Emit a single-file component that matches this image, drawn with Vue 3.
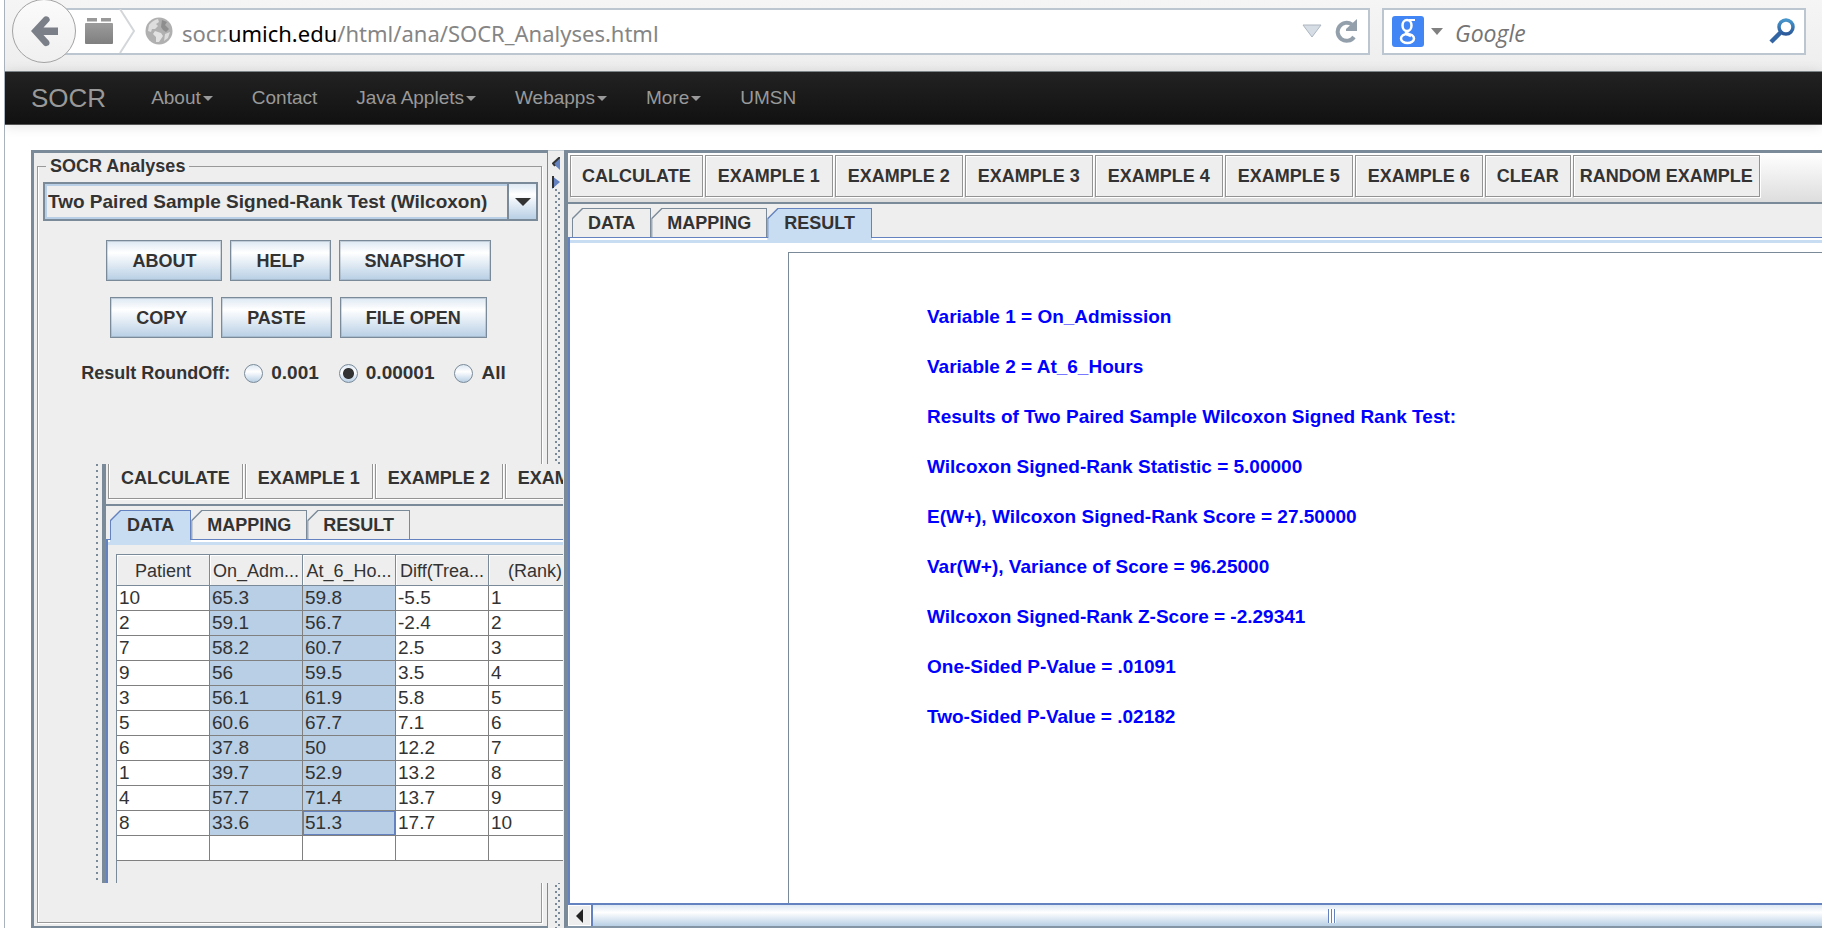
<script setup>
import { ref } from 'vue'

const menu = [
  { label: 'About', caret: true },
  { label: 'Contact', caret: false },
  { label: 'Java Applets', caret: true },
  { label: 'Webapps', caret: true },
  { label: 'More', caret: true },
  { label: 'UMSN', caret: false }
]
const analysis = ref('Two Paired Sample Signed-Rank Test (Wilcoxon)')
const roundOff = ref('0.00001')
const roundOptions = ['0.001', '0.00001', 'All']
const actionRows = [
  ['ABOUT', 'HELP', 'SNAPSHOT'],
  ['COPY', 'PASTE', 'FILE OPEN']
]
const tools = [
  'CALCULATE', 'EXAMPLE 1', 'EXAMPLE 2', 'EXAMPLE 3', 'EXAMPLE 4',
  'EXAMPLE 5', 'EXAMPLE 6', 'CLEAR', 'RANDOM EXAMPLE'
]
const tabs = ['DATA', 'MAPPING', 'RESULT']
const results = [
  'Variable 1 = On_Admission',
  'Variable 2 = At_6_Hours',
  'Results of Two Paired Sample Wilcoxon Signed Rank Test:',
  'Wilcoxon Signed-Rank Statistic = 5.00000',
  'E(W+), Wilcoxon Signed-Rank Score = 27.50000',
  'Var(W+), Variance of Score = 96.25000',
  'Wilcoxon Signed-Rank Z-Score = -2.29341',
  'One-Sided P-Value = .01091',
  'Two-Sided P-Value = .02182'
]
const columns = ['Patient', 'On_Adm...', 'At_6_Ho...', 'Diff(Trea...', '(Rank)']
const rows = [
  ['10', '65.3', '59.8', '-5.5', '1'],
  ['2', '59.1', '56.7', '-2.4', '2'],
  ['7', '58.2', '60.7', '2.5', '3'],
  ['9', '56', '59.5', '3.5', '4'],
  ['3', '56.1', '61.9', '5.8', '5'],
  ['5', '60.6', '67.7', '7.1', '6'],
  ['6', '37.8', '50', '12.2', '7'],
  ['1', '39.7', '52.9', '13.2', '8'],
  ['4', '57.7', '71.4', '13.7', '9'],
  ['8', '33.6', '51.3', '17.7', '10'],
  ['', '', '', '', '']
]
const isSelected = (r, c) => r < 10 && (c === 1 || c === 2)
const isFocused = (r, c) => r === 9 && c === 2
</script>

<template>
  <div class="window">
    <header class="chrome">
      <button class="back" aria-label="Back">
        <svg viewBox="0 0 62 62" width="62" height="62">
          <path d="M18 31 L31 17 Q33 15.500 36 17.500 Q37.500 19.500 36 21.500 L30.500 27.500 H45 V35 H30.500 L36 41 Q37.500 43.500 36 45 Q33 47 31 45.500 Z" fill="#7b7f88" />
        </svg>
      </button>
      <div class="address">
        <svg class="brick" viewBox="0 0 30 28" width="30" height="28" aria-hidden="true">
          <defs><linearGradient id="brickFill" x1="0" y1="0" x2="0" y2="1"><stop offset="0" stop-color="#9c9c9c" /><stop offset="1" stop-color="#7f7f7f" /></linearGradient></defs>
          <path d="M3 1h10v3.500H3zM17 1h10v3.500H17z" fill="#999" />
          <rect x="1" y="6" width="28" height="21" rx="1" fill="url(#brickFill)" />
        </svg>
        <svg class="chevron" viewBox="0 0 18 44" width="18" height="44" aria-hidden="true">
          <path d="M2 0 L16 22 L2 44" fill="none" stroke="#d4d7da" stroke-width="2" />
        </svg>
        <svg class="globe" viewBox="0 0 28 28" width="28" height="28" aria-hidden="true">
          <circle cx="14" cy="14" r="13.500" fill="#b0b0b0" />
          <path d="M4 8 Q8 3 13 2 L14 5 L11 7 L13 9 L10 12 L7 12 L6 15 L3 14 Z" fill="#dedede" />
          <path d="M17 3 L22 5 L20 8 L24 12 L21 15 L18 13 L16 10 Z" fill="#8e8e8e" />
          <path d="M10 14 L16 16 L18 19 L14 25 L11 25 L11 20 L8 17 Z" fill="#e2e2e2" />
          <path d="M20 17 L25 15 L23 21 L19 24 Z" fill="#dcdcdc" />
        </svg>
        <div class="url" role="textbox" aria-label="Address">socr.<b>umich.edu</b>/html/ana/SOCR_Analyses.html</div>
        <svg viewBox="0 0 20 14" width="20" height="14" aria-hidden="true">
          <path d="M1 1 H19 L10 13 Z" fill="#d6dde5" stroke="#adb6c0" stroke-width="1" />
        </svg>
        <button class="plain reload" aria-label="Reload">
          <svg viewBox="0 0 24 24" width="24" height="24">
            <path d="M20 18 A9 9 0 1 1 18 5.500" fill="none" stroke="#93a0ac" stroke-width="4" />
            <path d="M23 0 V12 H12 V10 Z" fill="#93a0ac" />
          </svg>
        </button>
      </div>
      <div class="search">
        <button class="plain engine" aria-label="Choose search engine">
          <svg viewBox="0 0 32 31" width="32" height="31">
            <rect width="32" height="31" rx="3" fill="#4285f4" />
            <g fill="none" stroke="#fff">
              <ellipse cx="15" cy="9.500" rx="4.500" ry="5.500" stroke-width="2.500" />
              <path d="M17 4 H23" stroke-width="2" />
              <path d="M17 15 Q12 16.500 15 18.500 L19 20" stroke-width="2.500" />
              <ellipse cx="15.500" cy="22.500" rx="6.500" ry="4.500" stroke-width="2.500" />
            </g>
          </svg>
          <svg viewBox="0 0 12 7" width="12" height="7"><path d="M0 0 H12 L6 7 Z" fill="#808080" /></svg>
        </button>
        <input class="query" type="text" placeholder="Google" aria-label="Search Google">
        <button class="plain" aria-label="Search">
          <svg viewBox="0 0 28 28" width="28" height="28">
            <defs><linearGradient id="lens" x1="0" y1="0" x2="0" y2="1"><stop offset="0" stop-color="#4796cb" /><stop offset="1" stop-color="#2c5a9b" /></linearGradient></defs>
            <path d="M12.500 15.500 L3 25" stroke="#3365a5" stroke-width="4.500" fill="none" />
            <circle cx="18" cy="10" r="7" fill="none" stroke="url(#lens)" stroke-width="3.500" />
          </svg>
        </button>
      </div>
    </header>

    <nav class="navbar">
      <a href="#" class="brand">SOCR</a>
      <a v-for="item in menu" :key="item.label" href="#" class="nav-item">{{ item.label }}<span v-if="item.caret" class="caret"></span></a>
    </nav>

    <main class="workspace">
      <section class="controls">
        <fieldset class="group">
          <legend>SOCR Analyses</legend>
          <div class="combo">
            <select v-model="analysis" aria-label="Analysis">
              <option>Two Paired Sample Signed-Rank Test (Wilcoxon)</option>
            </select>
            <span class="combo-arrow" aria-hidden="true"><svg viewBox="0 0 16 8" width="16" height="8"><path d="M0 0H16L8 8Z" fill="#333" /></svg></span>
          </div>
          <div v-for="(row, i) in actionRows" :key="i" class="actions">
            <button v-for="name in row" :key="name" class="metal">{{ name }}</button>
          </div>
          <div class="rounding" role="radiogroup" aria-label="Result RoundOff">
            <span>Result RoundOff:</span>
            <label v-for="o in roundOptions" :key="o"><input v-model="roundOff" type="radio" name="roundoff" :value="o">{{ o }}</label>
          </div>
        </fieldset>
      </section>

      <div class="divider" aria-hidden="true">
        <svg viewBox="0 0 8 32" width="8" height="32">
          <path d="M8 0 V13 L1 6.500 Z" fill="#6382bf" /><path d="M8 0 L1 6.500 L3 9" fill="none" stroke="#333" stroke-width="2" />
          <path d="M0 19 V32 L8 25 Z" fill="#6382bf" /><path d="M1 19 V31" stroke="#333" stroke-width="2" />
        </svg>
        <div class="bumps"></div>
      </div>

      <section class="output">
        <div class="toolbar">
          <button v-for="name in tools" :key="name" class="tool" :class="{ snug: !name.startsWith('EX'), tight: name === 'RANDOM EXAMPLE' }">{{ name }}</button>
        </div>
        <div class="tabbar" role="tablist">
          <button v-for="name in tabs" :key="name" class="tab" role="tab" :class="{ active: name === 'RESULT' }" :aria-selected="name === 'RESULT'"><span>{{ name }}</span></button>
        </div>
        <div class="edge"></div>
        <div class="result-pane">
          <div class="result-box">
            <p v-for="line in results" :key="line">{{ line }}</p>
          </div>
        </div>
        <div class="scrollbar">
          <button class="plain scroll-left" aria-label="Scroll left"><svg viewBox="0 0 7 14" width="7" height="14"><path d="M7 0V14L0 7Z" fill="#222" /></svg></button>
          <div class="thumb"><span class="grip"></span></div>
        </div>
      </section>

      <section class="overlay">
        <div class="bumps narrow"></div>
        <div class="overlay-body">
          <div class="toolbar">
            <button v-for="name in tools.slice(0, 4)" :key="name" class="tool">{{ name }}</button>
          </div>
          <div class="tabbar" role="tablist">
            <button v-for="name in tabs" :key="name" class="tab" role="tab" :class="{ active: name === 'DATA' }" :aria-selected="name === 'DATA'"><span>{{ name }}</span></button>
          </div>
          <div class="edge"></div>
          <div class="data-pane">
            <div class="table-frame">
              <table>
                <thead><tr><th v-for="c in columns" :key="c" scope="col">{{ c }}</th></tr></thead>
                <tbody>
                  <tr v-for="(row, r) in rows" :key="r">
                    <td v-for="(cell, c) in row" :key="c" :class="{ selected: isSelected(r, c), focused: isFocused(r, c) }">{{ cell }}</td>
                  </tr>
                </tbody>
              </table>
            </div>
          </div>
        </div>
      </section>
    </main>
  </div>
</template>

<style>
body { margin: 0; background: #fff; }
</style>

<style scoped>
* { box-sizing: border-box; }
.window {
  display: flex;
  flex-direction: column;
  height: 100vh;
  min-height: 920px;
  margin-left: 4px;
  border-left: 1px solid #aab3bc;
  overflow: hidden;
  font-family: "Liberation Sans", Arial, sans-serif;
  color: #333;
}
button, input, select { font: inherit; color: inherit; margin: 0; }
.plain { padding: 0; border: 0; background: none; display: flex; align-items: center; }

.chrome {
  display: flex;
  align-items: center;
  height: 71px;
  flex: none;
  padding: 0 16px 9px 7px;
  background: linear-gradient(#f5f5f5, #eee);
}
.back {
  flex: none;
  width: 64px;
  height: 64px;
  padding: 0;
  border: 1px solid #a3a3a3;
  border-radius: 50%;
  background: linear-gradient(#fbfbfb, #f0f0f0);
  position: relative;
  z-index: 1;
}
.address, .search {
  display: flex;
  align-items: center;
  height: 47px;
  border: 2px solid #bcc6d0;
  background: #fff;
}
.address { flex: 1; margin-left: -12px; padding: 0 10px 0 18px; }
.chevron { margin-left: 4px; }
.globe { margin: 0 9px; }
.url { flex: 1; padding-top: 4px; font: 22px/30px "Noto Sans", sans-serif; color: #858585; white-space: nowrap; }
.url b { font-weight: 400; color: #000; }
.reload { margin-left: 12px; }
.search { width: 424px; margin-left: 12px; padding: 0 8px; }
.engine { gap: 7px; }
.query {
  flex: 1;
  min-width: 0;
  margin-left: 12px;
  padding: 4px 0 0;
  border: 0;
  outline: 0;
  background: none;
  font: italic 23px/30px "Open Sans", sans-serif;
}
.query::placeholder { color: #757575; opacity: 1; }

.navbar {
  display: flex;
  align-items: center;
  flex: none;
  height: 54px;
  padding: 0 26px;
  border-top: 1px solid #7d8488;
  border-bottom: 1px solid #555;
  background: linear-gradient(#222, #111);
  box-shadow: 0 1px 12px rgba(0, 0, 0, 0.12);
  gap: 39px;
}
.navbar a { color: #999; text-decoration: none; white-space: nowrap; }
.brand { font-size: 26px; line-height: 30px; margin-right: 6px; }
.nav-item { display: flex; align-items: center; gap: 2px; font-size: 19px; line-height: 24px; }
.caret { border: 5px solid transparent; border-top-color: #999; border-bottom: 0; }

.workspace {
  position: relative;
  display: grid;
  grid-template-columns: 517px 16px minmax(0, 1fr);
  flex: 1;
  min-height: 0;
  margin: 25px 0 0 26px;
  background: #eee;
  font-size: 18px;
  line-height: 22px;
  font-weight: 700;
}
.controls {
  display: flex;
  padding: 2px 5px 3px 3px;
  border: 3px solid #7a8a99;
  border-right-width: 1px;
  border-bottom-width: 2px;
}
.group {
  flex: 1;
  min-width: 0;
  margin: 0;
  padding: 5px 3px 0 5px;
  border: 1px solid #999;
  box-shadow: inset 1px 0 #fff, 1px 1px #fff;
}
.group legend { margin-left: 3px; padding: 0 4px; }
.combo { display: flex; height: 39px; border: 2px solid #7a8a99; box-shadow: inset 0 0 0 2px #b8cfe5; }
.combo select {
  flex: 1;
  min-width: 0;
  appearance: none;
  border: 0;
  padding: 0 2px 0 3px;
  background: transparent;
  font-size: 19px;
  font-weight: 700;
}
.combo-arrow {
  display: flex;
  align-items: center;
  justify-content: center;
  width: 29px;
  border-left: 2px solid #7a8a99;
  background: linear-gradient(#dde8f3, #fff 30%, #b8cfe5);
}
.actions { display: flex; justify-content: center; gap: 8px; margin-top: 16px; padding-left: 16px; }
.combo + .actions { margin-top: 19px; }
.metal {
  height: 41px;
  padding: 0 25px;
  border: 1px solid #7a8a99;
  box-shadow: inset 0 0 0 1px rgba(122, 138, 153, 0.3);
  background: linear-gradient(#dde8f3, #fff 30%, #b8cfe5);
  font-weight: 700;
}
.rounding { display: flex; align-items: center; justify-content: center; margin-top: 24px; padding-left: 6px; white-space: nowrap; }
.rounding span { margin-right: 14px; }
.rounding label { display: flex; align-items: center; gap: 8px; font-size: 19px; }
.rounding label + label { margin-left: 20px; }
.rounding input {
  appearance: none;
  width: 19px;
  height: 19px;
  border: 1px solid #7a8a99;
  border-radius: 50%;
  background: linear-gradient(#dde8f3, #fff 40%, #b8cfe5);
}
.rounding input:checked { background: radial-gradient(circle, #333 5px, transparent 6px), linear-gradient(#dde8f3, #fff 40%, #b8cfe5); }

.divider { display: flex; flex-direction: column; padding: 6px 2px 0 4px; border-top: 1px solid #c4ccd4; }
.bumps {
  flex: 1;
  width: 6px;
  margin-left: 3px;
  background:
    radial-gradient(circle at 1px 1px, #7a8a99 1px, transparent 1px) 0 0 / 6px 6px,
    radial-gradient(circle at 4px 4px, #7a8a99 1px, transparent 1px) 0 0 / 6px 6px;
}
.bumps.narrow { flex: none; width: 3px; margin: 0 3px 0 1px; }

.output {
  display: flex;
  flex-direction: column;
  min-width: 0;
  border-top: 3px solid #7a8a99;
  border-left: 4px solid #7a8a99;
  border-bottom: 2px solid #8495a5;
}
.toolbar {
  display: flex;
  flex: none;
  gap: 2px;
  padding: 2px 2px 5px;
  border-bottom: 2px solid #7a8a99;
  background: linear-gradient(#fff, #ddd);
}
.tool {
  flex: none;
  height: 42px;
  padding: 0 12px;
  border: 1px solid #939393;
  box-shadow: inset 1px 1px #fff, 1px 1px #fff;
  background: #eee;
  font-weight: 700;
  white-space: nowrap;
}
.tool.snug { padding: 0 11px; }
.tool.tight { padding: 0 6px; }
.tabbar { display: flex; flex: none; padding: 4px 0 0 4px; background: #eee; }
.tab {
  position: relative;
  isolation: isolate;
  height: 29px;
  padding: 0 16px;
  border: 0;
  background: #7a8a99;
  clip-path: polygon(0 10px, 10px 0, 100% 0, 100% 100%, 0 100%);
  font-weight: 700;
}
.tab::before {
  content: "";
  position: absolute;
  z-index: -1;
  inset: 1px 1px 0;
  background: #eee;
  clip-path: polygon(0 10px, 10px 0, 100% 0, 100% 100%, 0 100%);
}
.tab.active { z-index: 1; height: 33px; margin-bottom: -4px; padding: 0 17px 4px; background: linear-gradient(#6382bf 30px, #c8ddf2 30px); }
.tab.active::before { background: #c8ddf2; }
.edge {
  flex: none;
  height: 7px;
  border-top: 1px solid #6382bf;
  background:
    linear-gradient(#6382bf, #6382bf) 0 0 / 2px 100% no-repeat,
    linear-gradient(#fff 2px, #c8ddf2 2px, #c8ddf2 5px, #fff 5px);
}
.result-pane { display: flex; flex: 1; min-height: 0; padding: 8px 0 0 218px; border-left: 2px solid #6382bf; background: #fff; }
.result-box { flex: 1; padding: 39px 0 0 138px; border-top: 1px solid #7a8a99; border-left: 1px solid #7a8a99; color: #00f; font-size: 19px; overflow: hidden; }
.result-box p { margin: 0; line-height: 50px; white-space: nowrap; }
.scrollbar { display: flex; flex: none; height: 23px; border-top: 2px solid #6382bf; overflow: hidden; }
.scroll-left { flex: none; justify-content: center; width: 23px; border: 1px solid #fff; }
.thumb {
  display: flex;
  flex: none;
  width: 118%;
  align-items: center;
  justify-content: center;
  border-left: 2px solid #6382bf;
  background: linear-gradient(#dde8f3, #fff 35%, #b8cfe5);
}
.grip { width: 8px; height: 14px; background: repeating-linear-gradient(90deg, #6382bf 0 1px, #fff 1px 3px); }

.overlay {
  position: absolute;
  top: 314px;
  left: 64px;
  display: flex;
  width: 468px;
  height: 419px;
  overflow: hidden;
  background: #eee;
}
.overlay-body { display: flex; flex-direction: column; flex: 1; min-width: 0; border-left: 4px solid #7a8a99; }
.overlay .toolbar { height: 42px; align-items: flex-end; background: #eee; }
.overlay .toolbar, .overlay .tabbar { overflow-x: clip; }
.overlay .edge {
  background:
    linear-gradient(#6382bf, #6382bf) 0 0 / 2px 100% no-repeat,
    linear-gradient(#fff 2px, #c8ddf2 2px, #c8ddf2 5px, #eee 5px);
}
.data-pane { flex: 1; padding: 8px 0 0 8px; border-left: 2px solid #6382bf; }
.table-frame { height: 100%; border-top: 1px solid #7a8a99; border-left: 1px solid #7a8a99; }
table { width: 465px; table-layout: fixed; border-collapse: separate; border-spacing: 0; font-size: 19px; font-weight: 400; }
th, td { height: 25px; padding: 0 2px; border-right: 1px solid #808080; border-bottom: 1px solid #808080; line-height: 24px; white-space: nowrap; text-align: left; }
th { height: 31px; padding: 3px 0 0; border-color: #7a8a99; box-shadow: inset 1px 1px #fff; font-size: 18px; font-weight: 400; line-height: 27px; text-align: center; }
td { background: #fff; }
td.selected { background: #b8cfe5; }
td.focused { box-shadow: inset 0 0 0 1px #6382bf; }
</style>
